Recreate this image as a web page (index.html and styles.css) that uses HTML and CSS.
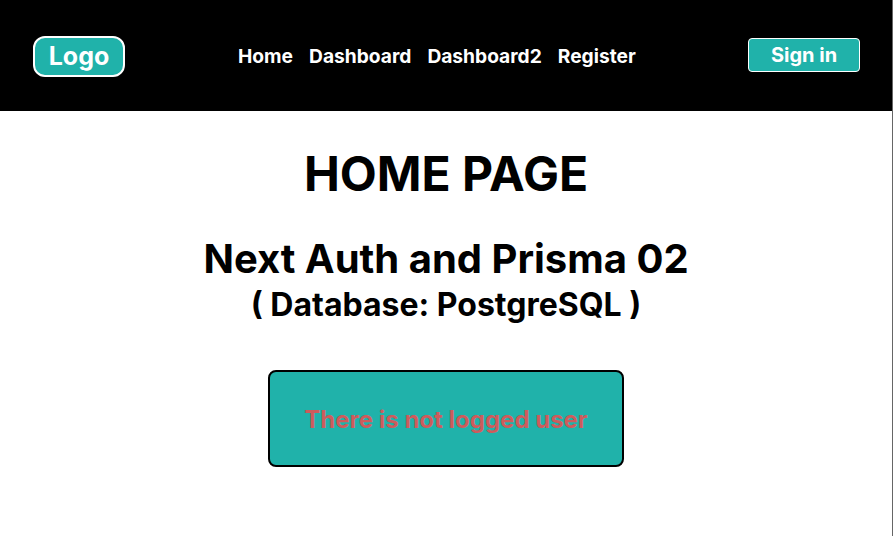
FILE: index.html
```html
<!DOCTYPE html>
<html>
<head>
<meta charset="utf-8">
<link rel="stylesheet" href="styles.css">
</head>
<body>
<header class="topbar">
  <a class="logo">Logo</a>
  <nav class="nav">
    <a>Home</a>
    <a>Dashboard</a>
    <a>Dashboard2</a>
    <a>Register</a>
  </nav>
  <button class="signin">Sign in</button>
</header>
<main class="main">
  <h1 class="title">HOME PAGE</h1>
  <h2 class="subtitle">Next Auth and Prisma 02</h2>
  <p class="db">( Database: PostgreSQL )</p>
  <div class="status">There is not logged user</div>
</main>
</body>
</html>
```

FILE: styles.css
```css
html, body {
  margin: 0;
  padding: 0;
}
body {
  font-family: Inter, "Noto Sans", sans-serif;
  background: #fff;
  color: #000;
  height: 536px;
  overflow: hidden;
  border-right: 1px solid #666;
  box-sizing: border-box;
}
.topbar {
  height: 111px;
  background: #000;
  display: flex;
  align-items: center;
  padding: 0 33px;
  box-sizing: border-box;
  margin-right: -1px;
}
.logo {
  display: flex;
  align-items: center;
  justify-content: center;
  width: 92px;
  height: 41px;
  box-sizing: border-box;
  border: 2px solid #fff;
  border-radius: 12px;
  background: #20b2aa;
  color: #fff;
  font-weight: 700;
  font-size: 25px;
  margin-top: 1px;
}
.nav {
  display: flex;
  gap: 16px;
  margin-left: 113px;
  margin-top: 1px;
}
.nav a {
  color: #fff;
  font-weight: 700;
  font-size: 19.2px;
}
.signin {
  margin-left: auto;
  width: 112px;
  height: 34px;
  background: #20b2aa;
  color: #fff;
  border: 1px solid #fff;
  border-radius: 4px;
  font-family: inherit;
  font-weight: 700;
  font-size: 20px;
  padding: 0;
  margin-top: -1px;
}
.main {
  display: flex;
  flex-direction: column;
  align-items: center;
}
.title {
  margin: 34px 0 0;
  font-size: 48px;
  font-weight: 700;
  line-height: 1.2;
}
.subtitle {
  margin: 32px 0 0;
  font-size: 40px;
  font-weight: 700;
  line-height: 1.2;
}
.db {
  margin: 3px 0 0;
  font-size: 32px;
  font-weight: 700;
  line-height: 1.2;
}
.status {
  margin-top: 46px;
  width: 356px;
  height: 97px;
  box-sizing: border-box;
  border: 2px solid #000;
  border-radius: 8px;
  background: #20b2aa;
  color: #cd5c5c;
  font-weight: 700;
  font-size: 24px;
  padding-top: 2px;
  display: flex;
  align-items: center;
  justify-content: center;
}
```
